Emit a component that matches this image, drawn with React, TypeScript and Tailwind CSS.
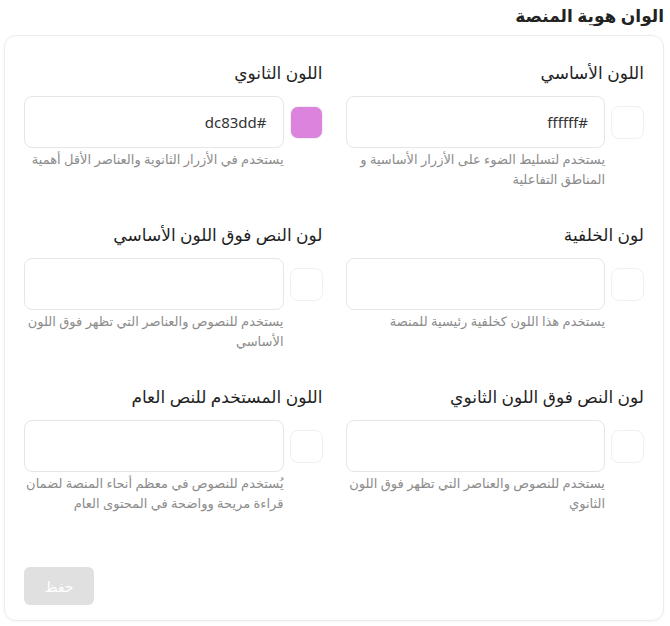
import React from 'react';

interface ColorField {
  label: string;
  value: string;
  swatch: string;
  help: string;
}

const fields: ColorField[] = [
  {
    label: 'اللون الأساسي',
    value: '#ffffff',
    swatch: '#ffffff',
    help: 'يستخدم لتسليط الضوء على الأزرار الأساسية و المناطق التفاعلية',
  },
  {
    label: 'اللون الثانوي',
    value: '#dc83dd',
    swatch: '#dc83dd',
    help: 'يستخدم في الأزرار الثانوية والعناصر الأقل أهمية',
  },
  {
    label: 'لون الخلفية',
    value: '',
    swatch: '#ffffff',
    help: 'يستخدم هذا اللون كخلفية رئيسية للمنصة',
  },
  {
    label: 'لون النص فوق اللون الأساسي',
    value: '',
    swatch: '#ffffff',
    help: 'يستخدم للنصوص والعناصر التي تظهر فوق اللون الأساسي',
  },
  {
    label: 'لون النص فوق اللون الثانوي',
    value: '',
    swatch: '#ffffff',
    help: 'يستخدم للنصوص والعناصر التي تظهر فوق اللون الثانوي',
  },
  {
    label: 'اللون المستخدم للنص العام',
    value: '',
    swatch: '#ffffff',
    help: 'يُستخدم للنصوص في معظم أنحاء المنصة لضمان قراءة مريحة وواضحة في المحتوى العام',
  },
];

const Field: React.FC<{ field: ColorField }> = ({ field }) => (
  <div className="flex flex-col">
    <label className="text-[17px] leading-6 font-medium text-[#1f1f1f] mb-[11px]">{field.label}</label>
    <div className="flex items-center gap-[6px]">
      <span
        className="w-[33px] h-[33px] shrink-0 rounded-lg border border-[#f0f0f0]"
        style={{ backgroundColor: field.swatch }}
      ></span>
      <input
        readOnly
        value={field.value}
        className="flex-1 min-w-0 h-[52px] rounded-lg border border-[#e6e6e6] bg-white px-4 text-[15px] text-[#333] outline-none"
      />
    </div>
    <p className="mt-[1px] mr-[39px] text-[13px] leading-5 text-[#8c8c8c]">{field.help}</p>
  </div>
);

const App: React.FC = () => {
  return (
    <div
      dir="rtl"
      className="w-[670px] h-[626px] bg-white pr-[6px] pl-[4px] pt-[4px]"
      style={{ fontFamily: '"Noto Sans", "DejaVu Sans", sans-serif' }}
    >
      <h2 className="text-[17px] leading-6 font-semibold text-[#222] mb-[7px]">الوان هوية المنصة</h2>
      <div className="rounded-xl border border-[#ececec] bg-white shadow-[0_1px_3px_rgba(0,0,0,0.04)] px-[19px] pt-[25px] pb-[15px]">
        <div className="grid grid-cols-2 gap-x-[23px] gap-y-[34px]">
          {fields.map(f => (
            <Field key={f.label} field={f} />
          ))}
        </div>
        <div className="flex justify-end mt-[54px]">
          <button
            disabled
            className="w-[70px] h-[38px] rounded-md bg-[#e0e0e0] text-white text-[14px] font-medium"
          >
            حفظ
          </button>
        </div>
      </div>
    </div>
  );
};

export default App;
